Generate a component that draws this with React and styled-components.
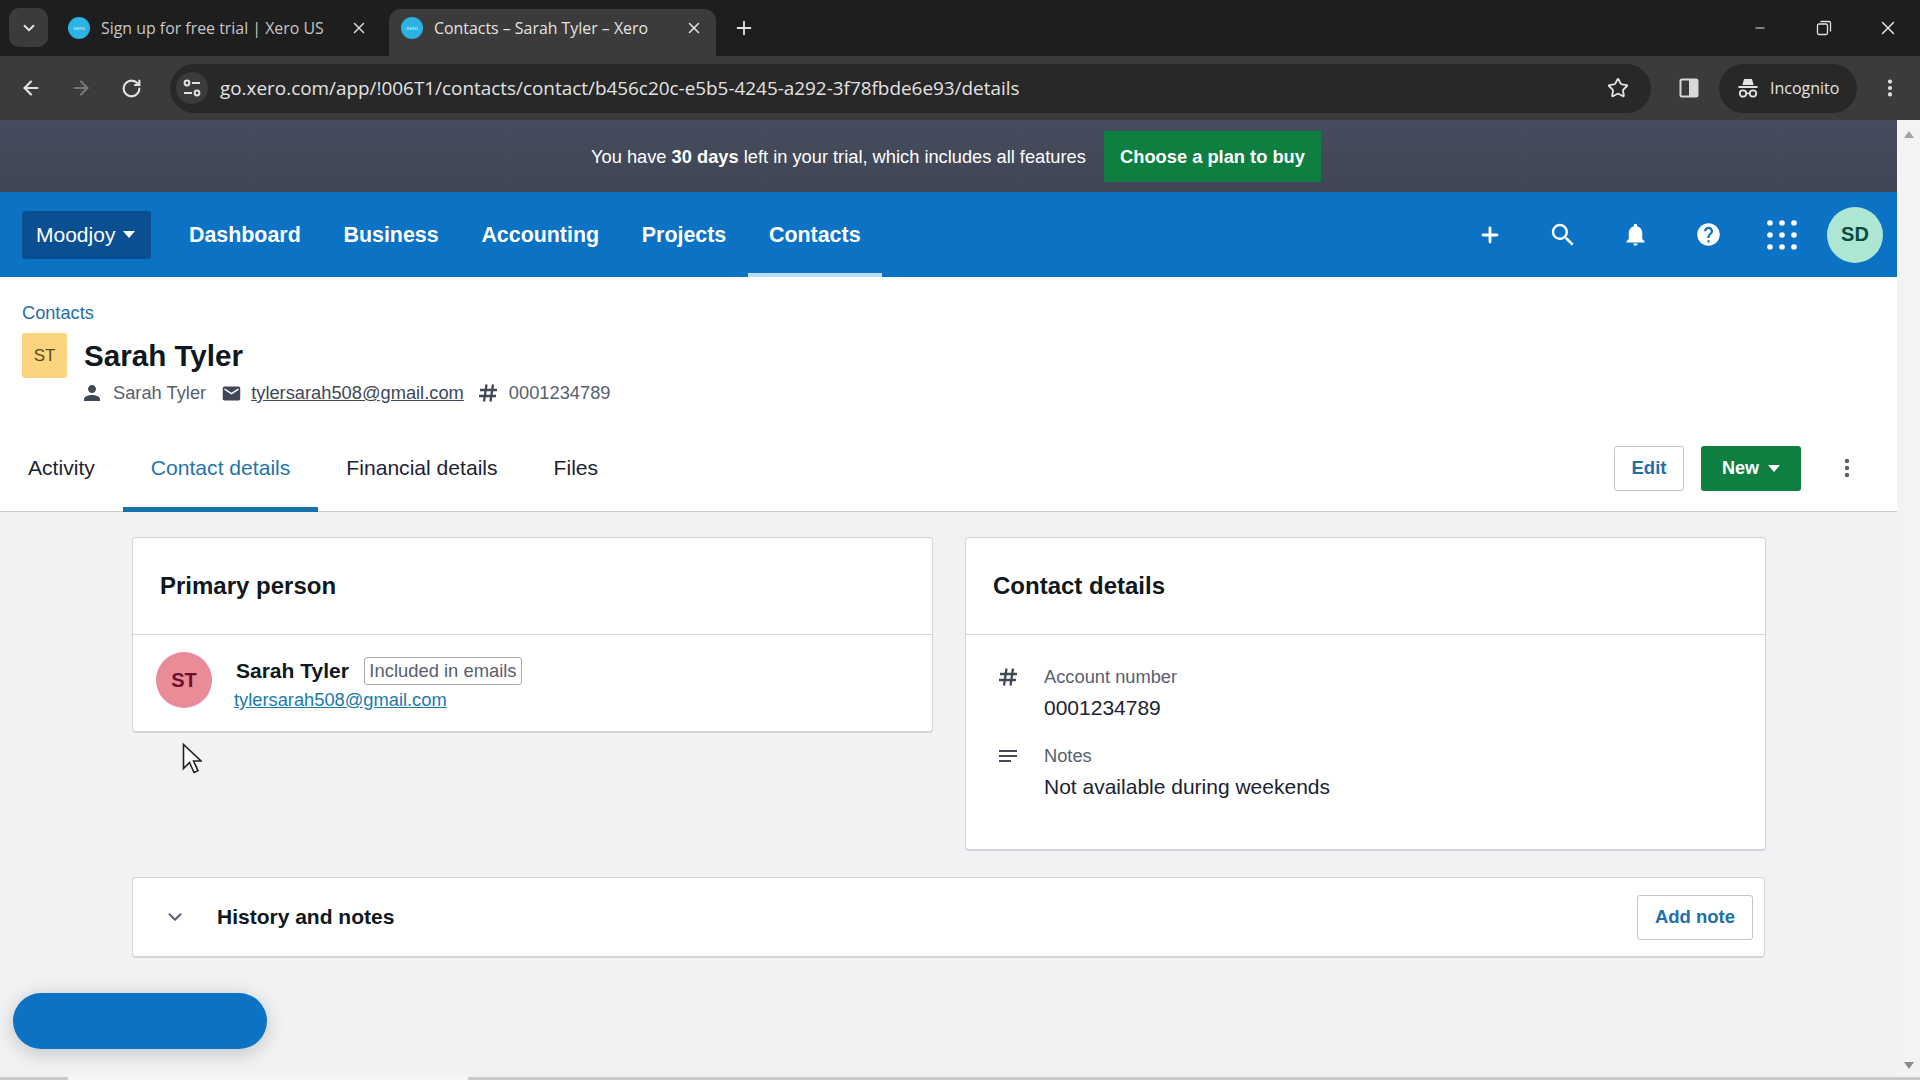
import styled, { createGlobalStyle } from 'styled-components';
import { ArrowLeft, ArrowRight, RotateCw, Star, X, Plus, ChevronDown, Minus, EllipsisVertical } from 'lucide-react';
import { MdPerson, MdEmail, MdNotes, MdSearch, MdNotifications, MdHelp } from 'react-icons/md';

const Global = createGlobalStyle`
    html, body {
        margin: 0;
        padding: 0;
        background: #f1f2f4;
        overflow: hidden;
    }
    * {
        box-sizing: border-box;
    }
`

const Favicon = () => <Fav><span>xero</span></Fav>

const TuneIcon = () => (
    <svg width="20" height="20" viewBox="0 0 20 20" fill="none" stroke="#e3e3e3" strokeWidth="2">
        <circle cx="5" cy="5" r="2.4" />
        <path d="M10 5h8" />
        <circle cx="15" cy="15" r="2.4" />
        <path d="M2 15h8" />
    </svg>
)

const PanelIcon = () => (
    <svg width="20" height="20" viewBox="0 0 20 20">
        <rect x="1.5" y="1.5" width="17" height="17" rx="1.5" fill="none" stroke="#d8d8d8" strokeWidth="2" />
        <rect x="10" y="2" width="8" height="16" fill="#d8d8d8" />
    </svg>
)

const RestoreIcon = () => (
    <svg width="16" height="16" viewBox="0 0 16 16" fill="none" stroke="#e3e3e3" strokeWidth="1.3">
        <rect x="1.5" y="4" width="10" height="10.5" rx="1.5" />
        <path d="M4.5 1.5h8.5a1.5 1.5 0 0 1 1.5 1.5v8.5" />
    </svg>
)

const IncognitoIcon = () => (
    <svg width="22" height="22" viewBox="0 0 22 22" fill="#e3e3e3">
        <path d="M7 2h8l1.6 6H5.4z" />
        <rect x="1.5" y="9" width="19" height="2" />
        <circle cx="6" cy="16.5" r="3.2" fill="none" stroke="#e3e3e3" strokeWidth="1.8" />
        <circle cx="16" cy="16.5" r="3.2" fill="none" stroke="#e3e3e3" strokeWidth="1.8" />
        <rect x="9" y="15.6" width="4" height="1.6" />
    </svg>
)

const GridIcon = () => (
    <svg width="30" height="30" viewBox="0 0 30 30" fill="#fff">
        {[3, 15, 27].map((cy) =>
            [3, 15, 27].map((cx) => <circle key={`${cx}-${cy}`} cx={cx} cy={cy} r="2.8" />)
        )}
    </svg>
)

const HashIcon = () => (
    <svg width="24" height="24" viewBox="0 0 24 24" fill="none" stroke="#404756" strokeWidth="2.3">
        <path d="M10.5 3.5 8 20.5M17 3.5l-2.5 17M4 9h17M3 15h17" />
    </svg>
)

const Caret = () => (
    <svg width="12" height="7" viewBox="0 0 12 7"><path d="M0 0h12L6 7z" fill="#fff" /></svg>
)

const App = () => {
    return (
        <Page>
            <Global />
            <TabStrip>
                <TabSearch><ChevronDown size={18} color="#e3e3e3" strokeWidth={2.5} /></TabSearch>
                <Tab>
                    <Favicon />
                    <TabTitle>Sign up for free trial | Xero US</TabTitle>
                    <X size={18} color="#d8d8d8" strokeWidth={2} />
                </Tab>
                <Tab $active>
                    <Favicon />
                    <TabTitle>Contacts – Sarah Tyler – Xero</TabTitle>
                    <X size={18} color="#e3e3e3" strokeWidth={2} />
                </Tab>
                <NewTab><Plus size={22} color="#e3e3e3" strokeWidth={2} /></NewTab>
                <WindowButtons>
                    <WindowButton><Minus size={14} color="#e3e3e3" /></WindowButton>
                    <WindowButton><RestoreIcon /></WindowButton>
                    <WindowButton><X size={22} color="#e3e3e3" strokeWidth={1.6} /></WindowButton>
                </WindowButtons>
            </TabStrip>

            <Toolbar>
                <ToolIcon><ArrowLeft size={22} color="#e3e3e3" strokeWidth={2.4} /></ToolIcon>
                <ToolIcon><ArrowRight size={22} color="#767676" strokeWidth={2.4} /></ToolIcon>
                <ToolIcon><RotateCw size={21} color="#e3e3e3" strokeWidth={2.4} /></ToolIcon>
                <UrlBar>
                    <SiteInfo><TuneIcon /></SiteInfo>
                    <UrlText>go.xero.com/app/!006T1/contacts/contact/b456c20c-e5b5-4245-a292-3f78fbde6e93/details</UrlText>
                    <Star size={22} color="#e3e3e3" strokeWidth={2} />
                </UrlBar>
                <PanelButton><PanelIcon /></PanelButton>
                <IncognitoPill>
                    <IncognitoIcon />
                    <span>Incognito</span>
                </IncognitoPill>
                <MenuDots><EllipsisVertical size={22} color="#e3e3e3" strokeWidth={2.6} /></MenuDots>
            </Toolbar>

            <Viewport>
                <Main>
                    <Banner>
                        <BannerText>You have <b>30 days</b> left in your trial, which includes all features</BannerText>
                        <BuyButton>Choose a plan to buy</BuyButton>
                    </Banner>

                    <Nav>
                        <OrgButton>Moodjoy <Caret /></OrgButton>
                        <NavItem>Dashboard</NavItem>
                        <NavItem>Business</NavItem>
                        <NavItem>Accounting</NavItem>
                        <NavItem>Projects</NavItem>
                        <NavItem $active>Contacts</NavItem>
                        <NavRight>
                            <NavIcon><Plus size={24} color="#fff" strokeWidth={2.8} /></NavIcon>
                            <NavIcon><MdSearch size={30} color="#fff" /></NavIcon>
                            <NavIcon><MdNotifications size={27} color="#fff" /></NavIcon>
                            <NavIcon><MdHelp size={27} color="#fff" /></NavIcon>
                            <NavIcon><GridIcon /></NavIcon>
                            <UserAvatar>SD</UserAvatar>
                        </NavRight>
                    </Nav>

                    <ContactHeader>
                        <Breadcrumb>Contacts</Breadcrumb>
                        <NameRow>
                            <Initials>ST</Initials>
                            <H1>Sarah Tyler</H1>
                        </NameRow>
                        <MetaRow>
                            <MdPerson size={24} color="#404756" />
                            <MetaText>Sarah Tyler</MetaText>
                            <MdEmail size={21} color="#404756" />
                            <MetaLink>tylersarah508@gmail.com</MetaLink>
                            <HashIcon />
                            <MetaText>0001234789</MetaText>
                        </MetaRow>
                        <TabsRow>
                            <TabLink>Activity</TabLink>
                            <TabLink $active>Contact details</TabLink>
                            <TabLink>Financial details</TabLink>
                            <TabLink>Files</TabLink>
                            <Actions>
                                <OutlineButton>Edit</OutlineButton>
                                <GreenButton>New <Caret /></GreenButton>
                                <MoreButton><EllipsisVertical size={24} color="#59606e" strokeWidth={2.4} /></MoreButton>
                            </Actions>
                        </TabsRow>
                    </ContactHeader>

                    <Content>
                        <Cards>
                            <Card>
                                <CardHead>Primary person</CardHead>
                                <PersonRow>
                                    <PersonAvatar>ST</PersonAvatar>
                                    <PersonText>
                                        <PersonName>
                                            <b>Sarah Tyler</b>
                                            <Pill>Included in emails</Pill>
                                        </PersonName>
                                        <PersonEmail>tylersarah508@gmail.com</PersonEmail>
                                    </PersonText>
                                </PersonRow>
                            </Card>
                            <Card>
                                <CardHead>Contact details</CardHead>
                                <DetailList>
                                    <Detail>
                                        <DetailIcon><HashIcon /></DetailIcon>
                                        <div>
                                            <DetailLabel>Account number</DetailLabel>
                                            <DetailValue>0001234789</DetailValue>
                                        </div>
                                    </Detail>
                                    <Detail>
                                        <DetailIcon><MdNotes size={24} color="#404756" /></DetailIcon>
                                        <div>
                                            <DetailLabel>Notes</DetailLabel>
                                            <DetailValue>Not available during weekends</DetailValue>
                                        </div>
                                    </Detail>
                                </DetailList>
                            </Card>
                        </Cards>
                        <History>
                            <ChevronDown size={22} color="#59606e" strokeWidth={2.2} />
                            <HistoryTitle>History and notes</HistoryTitle>
                            <AddNote>Add note</AddNote>
                        </History>
                    </Content>
                    <HelpFab />
                </Main>
                <Scrollbar>
                    <ScrollArrow $up />
                    <ScrollArrow />
                </Scrollbar>
            </Viewport>

            <Cursor width="20" height="31" viewBox="0 0 20 31">
                <path d="M1.5 1.5v24l6-6 4.5 10 4-1.8-4.5-9.7h7.5z" fill="#fff" stroke="#222" strokeWidth="1.6" />
            </Cursor>
            <BottomEdge />
        </Page>
    )
}

export default App;

const sans = `"Liberation Sans", Arial, sans-serif`
const chrome = `"Open Sans", "Noto Sans", sans-serif`

const Page = styled.div`
    position: relative;
    width: 1920px;
    height: 1080px;
    display: flex;
    flex-direction: column;
    overflow: hidden;
    font-family: ${sans};
`

const TabStrip = styled.div`
    height: 56px;
    flex: none;
    background: #1e1e1e;
    display: flex;
    align-items: flex-end;
    padding-left: 9px;
    font-family: ${chrome};
`

const TabSearch = styled.div`
    width: 39px;
    height: 39px;
    margin-bottom: 9px;
    margin-right: 8px;
    border-radius: 10px;
    background: #3b3b3b;
    display: flex;
    align-items: center;
    justify-content: center;
`

const Tab = styled.div`
    width: ${(p) => (p.$active ? '327px' : '325px')};
    height: 47px;
    margin-right: ${(p) => (p.$active ? '0' : '8px')};
    display: flex;
    align-items: center;
    padding: 0 13px 9px 12px;
    border-radius: 12px 12px 0 0;
    background: ${(p) => (p.$active ? '#3b3b3b' : 'transparent')};
    color: ${(p) => (p.$active ? '#e3e3e3' : '#c7c7c7')};
`

const Fav = styled.div`
    width: 22px;
    height: 22px;
    flex: none;
    border-radius: 50%;
    background: #2bb3e6;
    display: flex;
    align-items: center;
    justify-content: center;
    color: #d8f2fb;
    font-size: 6px;
    font-family: ${sans};
`

const TabTitle = styled.div`
    margin-left: 11px;
    margin-right: auto;
    font-size: 15.9px;
    white-space: nowrap;
`

const NewTab = styled.div`
    width: 40px;
    height: 47px;
    margin-left: 8px;
    padding-bottom: 9px;
    display: flex;
    align-items: center;
    justify-content: center;
`

const WindowButtons = styled.div`
    margin-left: auto;
    height: 56px;
    display: flex;
    align-items: center;
`

const WindowButton = styled.div`
    width: 64px;
    display: flex;
    justify-content: center;
`

const Toolbar = styled.div`
    height: 64px;
    flex: none;
    background: #3b3b3b;
    display: flex;
    align-items: center;
    padding-left: 6px;
    font-family: ${chrome};
`

const ToolIcon = styled.div`
    width: 50px;
    display: flex;
    justify-content: center;
`

const UrlBar = styled.div`
    width: 1481px;
    height: 49px;
    margin-left: 14px;
    border-radius: 25px;
    background: #282828;
    display: flex;
    align-items: center;
    padding: 0 22px 0 6px;
`

const SiteInfo = styled.div`
    width: 32px;
    height: 32px;
    border-radius: 50%;
    background: #3b3b3b;
    display: flex;
    align-items: center;
    justify-content: center;
`

const UrlText = styled.div`
    margin-left: 12px;
    margin-right: auto;
    color: #e3e3e3;
    font-size: 18.9px;
    white-space: nowrap;
`

const PanelButton = styled.div`
    width: 68px;
    padding-left: 8px;
    display: flex;
    justify-content: center;
`

const IncognitoPill = styled.div`
    width: 138px;
    height: 49px;
    border-radius: 25px;
    background: #282828;
    display: flex;
    align-items: center;
    gap: 11px;
    padding-left: 18px;
    color: #e3e3e3;
    font-size: 16px;
`

const MenuDots = styled.div`
    width: 63px;
    padding-left: 3px;
    display: flex;
    justify-content: center;
`

const Viewport = styled.div`
    flex: 1;
    display: flex;
    min-height: 0;
`

const Main = styled.div`
    position: relative;
    flex: 1;
    min-width: 0;
    background: #f1f2f4;
    display: flex;
    flex-direction: column;
`

const Banner = styled.div`
    height: 72px;
    flex: none;
    background: linear-gradient(#454c5e, #404654);
    display: flex;
    align-items: center;
    padding-left: 591px;
    color: #fff;
`

const BannerText = styled.div`
    width: 513px;
    padding-top: 1px;
    font-size: 18.27px;
    white-space: nowrap;
`

const BuyButton = styled.div`
    width: 217px;
    height: 51px;
    padding-top: 1px;
    background: #0f7f41;
    color: #fff;
    font-size: 18.3px;
    font-weight: bold;
    display: flex;
    align-items: center;
    justify-content: center;
`

const Nav = styled.div`
    height: 85px;
    flex: none;
    background: #0b72c4;
    display: flex;
    align-items: center;
    padding: 0 14px 0 22px;
`

const OrgButton = styled.div`
    width: 129px;
    height: 48px;
    margin-right: 16.6px;
    padding-left: 14px;
    background: #0a4f92;
    border-radius: 3px;
    color: #fff;
    font-size: 21px;
    display: flex;
    align-items: center;
    gap: 8px;
`

const NavItem = styled.div`
    height: 85px;
    padding: 2px 21.4px 0;
    color: #fff;
    font-size: 21.4px;
    font-weight: bold;
    display: flex;
    align-items: center;
    border-bottom: 4px solid ${(p) => (p.$active ? '#bcdcf3' : 'transparent')};
    border-top: 4px solid transparent;
`

const NavRight = styled.div`
    margin-left: auto;
    display: flex;
    align-items: center;
`

const NavIcon = styled.div`
    width: 73px;
    display: flex;
    justify-content: center;
`

const UserAvatar = styled.div`
    width: 56px;
    height: 56px;
    margin-left: 9px;
    border-radius: 50%;
    background: #aee6d4;
    color: #0a4a3c;
    font-size: 20px;
    font-weight: bold;
    display: flex;
    align-items: center;
    justify-content: center;
`

const ContactHeader = styled.div`
    flex: none;
    background: #fff;
    border-bottom: 1px solid #ccced2;
    padding-top: 26px;
`

const Breadcrumb = styled.div`
    padding-left: 22px;
    color: #1f6fa8;
    font-size: 18.2px;
    line-height: 20px;
`

const NameRow = styled.div`
    display: flex;
    align-items: center;
    padding-left: 22px;
    margin-top: 10px;
`

const Initials = styled.div`
    width: 45px;
    height: 45px;
    background: #fbd47f;
    border-radius: 3px;
    color: #5c4a1c;
    font-size: 17px;
    display: flex;
    align-items: center;
    justify-content: center;
`

const H1 = styled.h1`
    margin: 0 0 0 17px;
    font-size: 29.6px;
    font-weight: bold;
    color: #0f1720;
`

const MetaRow = styled.div`
    display: flex;
    align-items: center;
    height: 28px;
    margin-top: 1px;
    padding-left: 80px;
`

const MetaText = styled.span`
    font-size: 18.3px;
    color: #59606e;
    margin: 0 15px 0 9px;
`

const MetaLink = styled.span`
    font-size: 18.3px;
    color: #404756;
    text-decoration: underline;
    margin: 0 12px 0 9px;
`

const TabsRow = styled.div`
    display: flex;
    align-items: stretch;
    height: 83px;
    margin-top: 21px;
`

const TabLink = styled.div`
    padding: 0 28px;
    font-size: 21.1px;
    color: ${(p) => (p.$active ? '#1f74ab' : '#1c2330')};
    display: flex;
    align-items: center;
    margin-bottom: -1px;
    border-bottom: 5px solid ${(p) => (p.$active ? '#1471ab' : 'transparent')};
`

const Actions = styled.div`
    margin-left: auto;
    padding: 0 27px 3px 0;
    display: flex;
    align-items: center;
`

const OutlineButton = styled.div`
    width: 70px;
    height: 45px;
    border: 1px solid #c2c5ca;
    border-radius: 3px;
    background: #fff;
    color: #1f6fa8;
    font-size: 18.5px;
    font-weight: bold;
    display: flex;
    align-items: center;
    justify-content: center;
`

const GreenButton = styled.div`
    width: 100px;
    height: 45px;
    margin-left: 17px;
    border-radius: 3px;
    background: #0f7f41;
    color: #fff;
    font-size: 18px;
    font-weight: bold;
    display: flex;
    align-items: center;
    justify-content: center;
    gap: 9px;
`

const MoreButton = styled.div`
    width: 46px;
    margin-left: 23px;
    display: flex;
    justify-content: center;
`

const Content = styled.div`
    padding: 25px 132px 0;
`

const Cards = styled.div`
    display: grid;
    grid-template-columns: 801px 801px;
    gap: 32px;
    align-items: start;
`

const Card = styled.div`
    background: #fff;
    border: 1px solid #d3d5d9;
    border-bottom-width: 2px;
    border-radius: 4px;
`

const CardHead = styled.div`
    height: 97px;
    padding-left: 27px;
    border-bottom: 1px solid #d3d5d9;
    font-size: 24px;
    font-weight: bold;
    color: #0f1720;
    display: flex;
    align-items: center;
`

const PersonRow = styled.div`
    display: flex;
    align-items: flex-start;
    gap: 22px;
    padding: 17px 23px 19px;
`

const PersonAvatar = styled.div`
    width: 56px;
    height: 56px;
    flex: none;
    border-radius: 50%;
    background: #e98c98;
    color: #6e0f2c;
    font-size: 20px;
    font-weight: bold;
    display: flex;
    align-items: center;
    justify-content: center;
`

const PersonText = styled.div`
    margin-top: 5px;
`

const PersonName = styled.div`
    display: flex;
    align-items: center;
    gap: 15px;
    font-size: 21px;
    color: #0f1720;
    margin-left: 2px;
`

const Pill = styled.span`
    height: 28px;
    padding: 0 4.5px;
    border: 1px solid #a9adb3;
    border-radius: 3px;
    font-size: 18.4px;
    color: #59606e;
    display: flex;
    align-items: center;
`

const PersonEmail = styled.div`
    margin-top: 3px;
    font-size: 18.3px;
    line-height: 24px;
    color: #1b7aa8;
    text-decoration: underline;
`

const DetailList = styled.div`
    padding: 30px 28px 50px;
    display: flex;
    flex-direction: column;
    gap: 24px;
`

const Detail = styled.div`
    display: flex;
`

const DetailIcon = styled.div`
    width: 48px;
    flex: none;
    margin-left: 2px;
`

const DetailLabel = styled.div`
    font-size: 18.3px;
    line-height: 24px;
    color: #59606e;
`

const DetailValue = styled.div`
    margin-top: 7px;
    font-size: 21px;
    line-height: 24px;
    color: #1c2330;
`

const History = styled.div`
    height: 81px;
    margin-top: 26px;
    padding: 0 11px 0 31px;
    background: #fff;
    border: 1px solid #d3d5d9;
    border-bottom-width: 2px;
    border-radius: 4px;
    display: flex;
    align-items: center;
`

const HistoryTitle = styled.div`
    margin-left: 31px;
    font-size: 21px;
    font-weight: bold;
    color: #0f1720;
`

const AddNote = styled(OutlineButton)`
    width: 116px;
    margin-left: auto;
`

const HelpFab = styled.div`
    position: absolute;
    left: 13px;
    top: 873px;
    width: 254px;
    height: 56px;
    border-radius: 28px;
    background: #0b72c4;
    box-shadow: 0 4px 20px rgba(0, 0, 0, 0.2);
`

const Scrollbar = styled.div`
    width: 23px;
    flex: none;
    background: #f3f3f3;
    display: flex;
    flex-direction: column;
    align-items: center;
    justify-content: space-between;
    padding: 11px 0;
`

const ScrollArrow = styled.div`
    width: 0;
    height: 0;
    border-left: 5px solid transparent;
    border-right: 5px solid transparent;
    ${(p) => (p.$up ? 'border-bottom: 7px solid #a3a3a3;' : 'border-top: 7px solid #8a8a8a;')}
`

const Cursor = styled.svg`
    position: absolute;
    left: 182px;
    top: 743px;
`

const BottomEdge = styled.div`
    position: absolute;
    left: 0;
    right: 0;
    bottom: 0;
    height: 3px;
    background: linear-gradient(90deg, #c8c9cb 0, #c8c9cb 68px, #f6f6f6 68px, #f6f6f6 468px, #c8c9cb 468px);
`
